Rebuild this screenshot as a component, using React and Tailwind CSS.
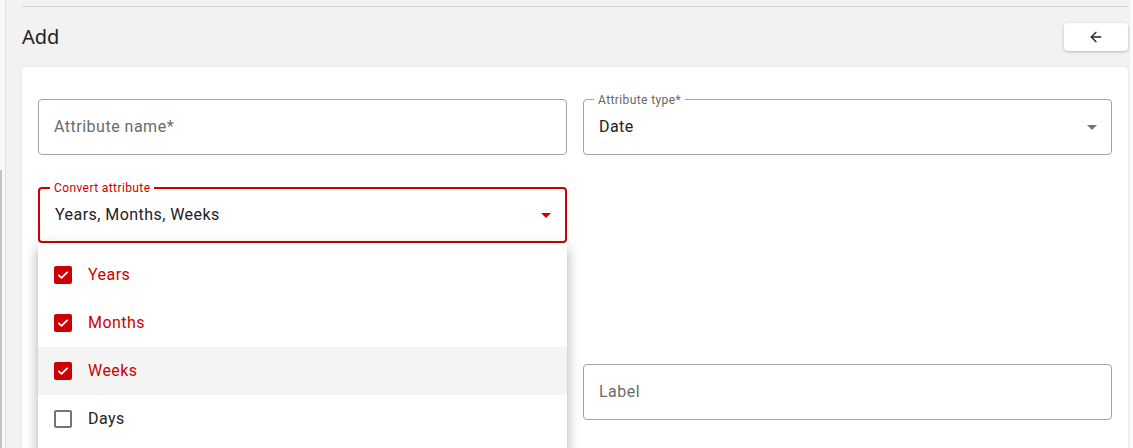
import React from 'react';
import { ArrowLeft } from 'lucide-react';

const RED = '#cc0000';

const DropArrow = ({ color }) => (
    <svg viewBox="0 0 24 24" className="w-6 h-6 absolute right-[7px] top-1/2 -translate-y-1/2" fill={color}>
        <path d="M7 10l5 5 5-5z" />
    </svg>
);

const Field = ({ label, value, placeholder, select, focused }) => (
    <div
        className={`relative h-[56px] rounded-[4px] bg-white flex items-center ${
            focused ? 'border-2 border-[#cc0000] px-[15px]' : 'border border-[#a3a3a3] px-[15px]'
        }`}
    >
        {label && (
            <span
                className={`absolute left-[10px] top-0 -translate-y-1/2 bg-white px-[4px] text-[12px] leading-none tracking-[0.4px] ${
                    focused ? 'text-[#cc0000] -mt-px left-[9px]' : 'text-[#666666]'
                }`}
            >
                {label}
            </span>
        )}
        {value ? (
            <span className="text-[16px] text-[#212121] tracking-[0.45px]">{value}</span>
        ) : (
            <span className="text-[16px] text-[#6b6b6b] tracking-[0.5px]">{placeholder}</span>
        )}
        {select && <DropArrow color={focused ? RED : '#757575'} />}
    </div>
);

const options = [
    { name: 'Years', checked: true },
    { name: 'Months', checked: true },
    { name: 'Weeks', checked: true, hover: true },
    { name: 'Days', checked: false },
];

const CheckBox = ({ checked }) =>
    checked ? (
        <span className="w-[18px] h-[18px] rounded-[2px] bg-[#cc0000] flex items-center justify-center shrink-0">
            <svg viewBox="0 0 24 24" className="w-[14px] h-[14px]" fill="none" stroke="white" strokeWidth="3.2" strokeLinecap="round" strokeLinejoin="round">
                <path d="M5 12.5l4.5 4.5L19 7.5" />
            </svg>
        </span>
    ) : (
        <span className="w-[18px] h-[18px] rounded-[2px] border-2 border-[#757575] shrink-0" />
    );

export default function App() {
    return (
        <div className="h-[448px] overflow-hidden bg-[#f2f2f2] flex font-['Roboto',sans-serif]">
            {/* left edge */}
            <div className="w-[6px] bg-[#f8f8f8] border-r border-[#e2e2e2] flex flex-col shrink-0">
                <div className="h-[170px]" />
                <div className="w-[2px] flex-1 bg-[#c4c4c4]" />
            </div>

            <div className="flex-1 pl-[16px] pr-[2px] pt-[6px] flex flex-col">
                <div className="border-t border-[#d6d6d6]" />
                <header className="flex items-center justify-between py-[16px]">
                    <h1 className="text-[20px] text-[#222] font-['Noto_Sans',sans-serif] leading-none">Add</h1>
                    <button className="w-[64px] h-[28px] bg-white rounded-[4px] shadow-[0_1px_3px_rgba(0,0,0,0.25)] flex items-center justify-center text-[#222]">
                        <ArrowLeft size={16} strokeWidth={2} />
                    </button>
                </header>

                <div className="flex-1 bg-white rounded-t-[4px] shadow-[0_0_2px_rgba(0,0,0,0.08)] px-[16px] pt-[32px]">
                    <div className="grid grid-cols-2 gap-x-[16px] gap-y-[32px]">
                        <Field placeholder="Attribute name*" />
                        <Field label="Attribute type*" value="Date" select />

                        <div className="relative z-10">
                            <Field label="Convert attribute" value="Years, Months, Weeks" select focused />
                            <ul className="absolute left-0 right-0 top-full bg-white py-[8px] shadow-[0px_5px_5px_-3px_rgba(0,0,0,0.2),0px_8px_10px_1px_rgba(0,0,0,0.14),0px_3px_14px_2px_rgba(0,0,0,0.12)]">
                                {options.map((o) => (
                                    <li
                                        key={o.name}
                                        className={`h-[48px] flex items-center gap-[16px] pl-[16px] text-[16px] tracking-[0.45px] ${
                                            o.hover ? 'bg-[#f4f4f4]' : ''
                                        } ${o.checked ? 'text-[#cc0000]' : 'text-[#222]'}`}
                                    >
                                        <CheckBox checked={o.checked} />
                                        <span>{o.name}</span>
                                    </li>
                                ))}
                                <li className="h-[48px]" />
                            </ul>
                        </div>
                        <div />

                        <div className="h-[56px]" />
                        <div />

                        <div className="h-[57px]" />
                        <div className="pt-px">
                            <Field placeholder="Label" />
                        </div>
                    </div>
                </div>
            </div>
            <div className="w-[3px] bg-[#fafafa] shrink-0" />
        </div>
    );
}
